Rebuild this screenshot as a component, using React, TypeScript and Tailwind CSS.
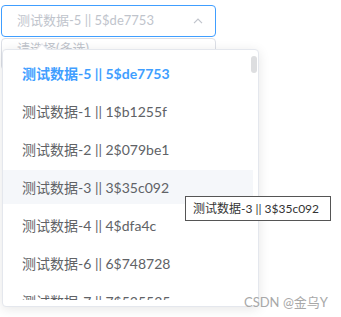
const options = [
  { label: "测试数据-5 || 5$de7753", selected: true },
  { label: "测试数据-1 || 1$b1255f" },
  { label: "测试数据-2 || 2$079be1" },
  { label: "测试数据-3 || 3$35c092", hover: true },
  { label: "测试数据-4 || 4$dfa4c" },
  { label: "测试数据-6 || 6$748728" },
  { label: "测试数据-7 || 7$535535" },
];

const ChevronUp = () => (
  <svg width="10" height="6" viewBox="0 0 10 6" fill="none">
    <path d="M1 5.2 L5 1.2 L9 5.2" stroke="#c0c4cc" strokeWidth="1.2" />
  </svg>
);

const App = () => {
  return (
    <div className="relative h-[317px] w-[341px] overflow-hidden bg-white font-['Lato','Noto_Sans_CJK_SC',sans-serif]">
      <div className="flex flex-col pl-[1px] pt-[5px]">
        <div className="flex h-[32px] w-[215px] items-center justify-between rounded-[4px] border border-[#409eff] pl-[15px] pr-[12px]">
          <span className="text-[13px] text-[#c0c4cc]">测试数据-5 || 5$de7753</span>
          <ChevronUp />
        </div>
        <div className="mt-[1px] flex h-[32px] w-[215px] items-center rounded-[4px] border border-[#dcdfe6] pl-[15px]">
          <span className="-mt-[10px] text-[13px] text-[#c0c4cc]">请选择(多选)</span>
        </div>
      </div>

      {/* dropdown panel */}
      <div className="absolute left-[2px] top-[49px] h-[258px] w-[257px] overflow-hidden rounded-[4px] border border-[#e4e7ed] bg-white py-[6px] shadow-[0_2px_12px_0_rgba(0,0,0,0.1)]">
        <div className="flex h-full w-[250px] flex-col gap-[4px] overflow-hidden">
          {options.map((o) => (
            <div
              key={o.label}
              className={`flex h-[34px] shrink-0 items-center pl-[19px] text-[14px] ${
                o.hover ? "bg-[#f5f7fa]" : ""
              } ${o.selected ? "font-bold text-[#409eff]" : "text-[#606266]"}`}
            >
              {o.label}
            </div>
          ))}
        </div>
        <div className="absolute right-[1px] top-[6px] h-[17px] w-[6px] rounded-full bg-[#dddee0]" />
      </div>

      <div className="absolute left-[38px] top-[45px] h-[8px] w-[8px] rotate-45 border-l border-t border-[#e4e7ed] bg-white" />

      <div className="absolute left-[185px] top-[196px] flex h-[25px] w-[146px] items-center border border-[#555] bg-white pl-[7px] text-[12px] text-[#333]">
        测试数据-3 || 3$35c092
      </div>

      <div className="absolute left-[244px] top-[293px] text-[13px] text-[#a8a8a8]">CSDN @金乌Y</div>
    </div>
  );
};

export default App;
